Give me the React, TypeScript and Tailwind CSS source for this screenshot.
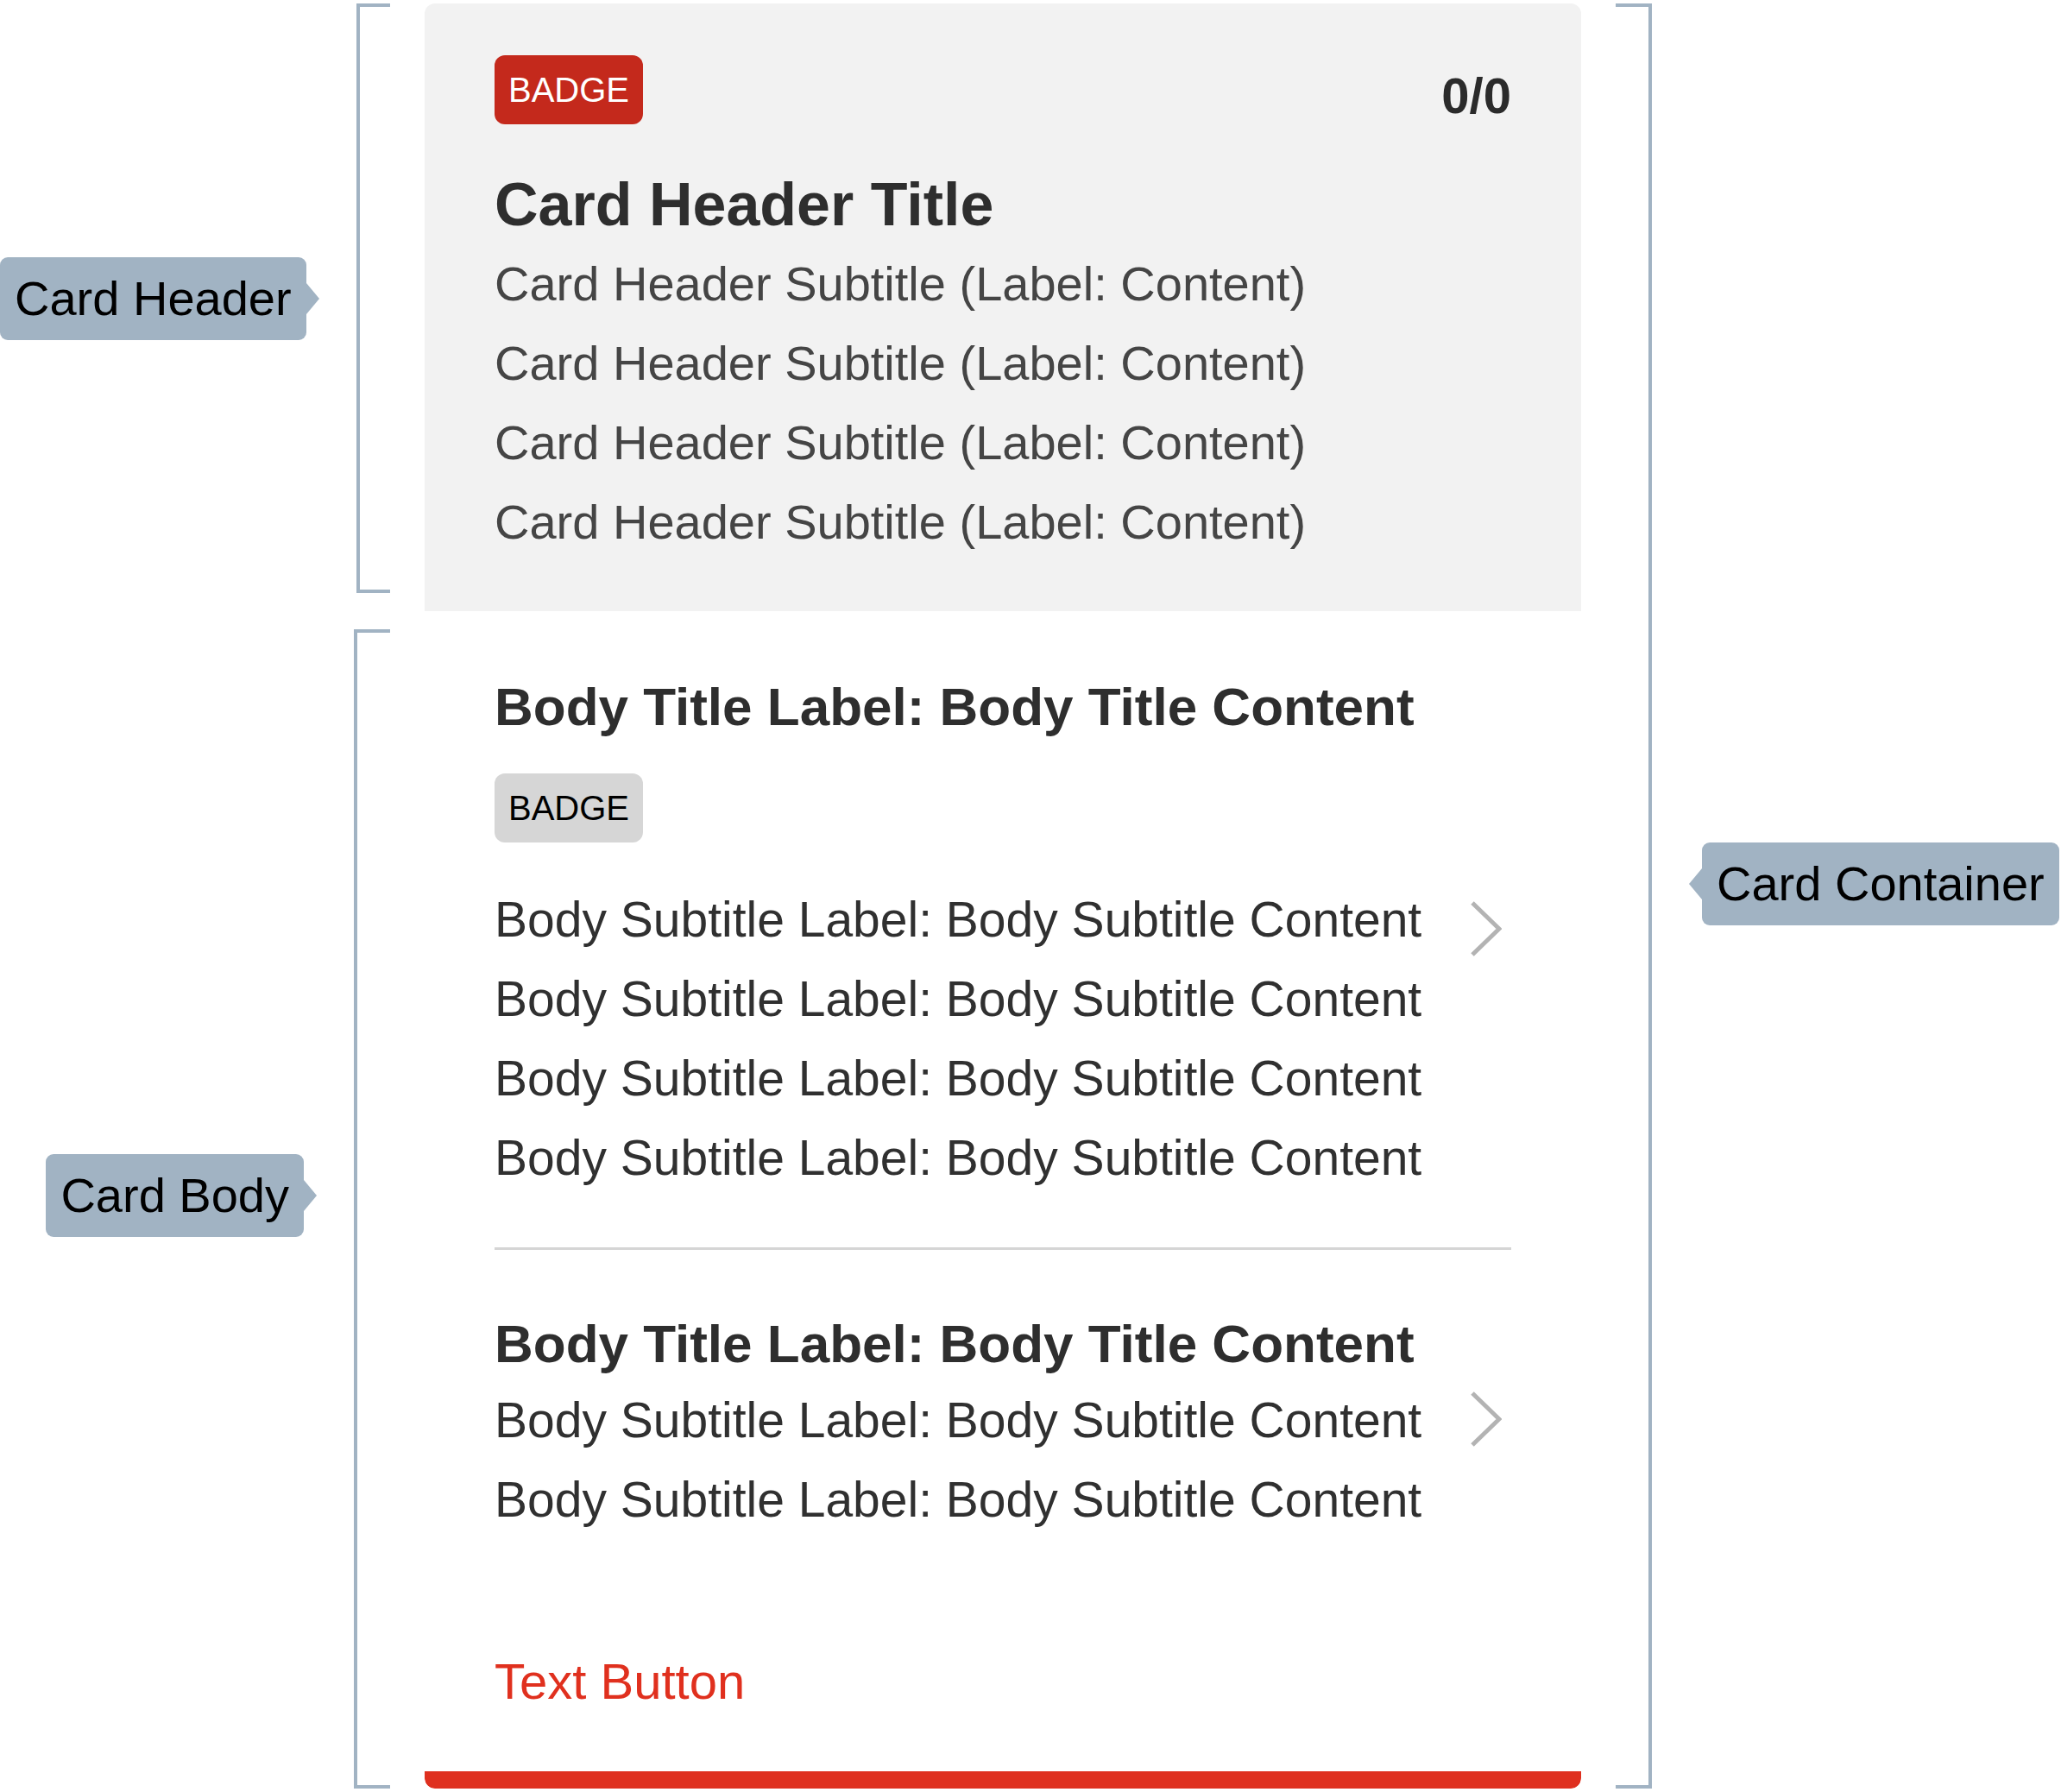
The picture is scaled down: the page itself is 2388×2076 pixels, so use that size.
const FONT = "font-['Liberation_Sans','Helvetica_Neue',Arial,sans-serif]"

function Chevron({ className }: { className?: string }) {
  return (
    <svg width="36" height="64" viewBox="0 0 36 64" className={className}>
      <polyline points="2,2 33,32 2,62" fill="none" stroke="#b3b3b3" strokeWidth="5" />
    </svg>
  )
}

// label with a little pointer, used for the annotations around the card
function Tag({ text, side, className }: { text: string; side: 'left' | 'right'; className?: string }) {
  return (
    <div className={`flex items-center ${className || ''}`}>
      {side === 'left' && (
        <div className="w-0 h-0 border-y-[18px] border-y-transparent border-r-[15px] border-r-[#a1b3c3]" />
      )}
      <div className="h-[96px] px-[17px] rounded-[9px] bg-[#a1b3c3] text-black text-[56px] leading-[96px] whitespace-nowrap">
        {text}
      </div>
      {side === 'right' && (
        <div className="w-0 h-0 border-y-[18px] border-y-transparent border-l-[15px] border-l-[#a1b3c3]" />
      )}
    </div>
  )
}

function SubRows({ rows, className }: { rows: string[]; className: string }) {
  return (
    <div className="flex flex-col">
      {rows.map((r, i) => (
        <div key={i} className={`leading-[92px] whitespace-nowrap ${className}`}>
          {r}
        </div>
      ))}
    </div>
  )
}

const HEADER_SUB = 'Card Header Subtitle (Label: Content)'
const BODY_SUB = 'Body Subtitle Label: Body Subtitle Content'

export default function App() {
  return (
    <div className={`w-[2388px] h-[2076px] overflow-hidden bg-white flex pt-[4px] ${FONT}`}>
      {/* Left annotations */}
      <div className="w-[452px] flex flex-col shrink-0">
        <div className="h-[683px] flex items-center justify-end">
          <Tag text="Card Header" side="right" className="mr-[43px]" />
          <div className="w-[42px] h-full border-l-4 border-y-4 border-[#a1b3c3]" />
        </div>
        <div className="h-[1343px] mt-[42px] flex items-center justify-end">
          <Tag text="Card Body" side="right" className="mr-[43px] mb-[32px]" />
          <div className="w-[42px] h-full border-l-4 border-y-4 border-[#a1b3c3]" />
        </div>
      </div>

      {/* Card */}
      <div className="ml-[40px] w-[1340px] h-[2068px] shrink-0 flex flex-col rounded-[12px] overflow-hidden">
        {/* Header */}
        <div className="bg-[#f2f2f2] h-[704px] px-[81px] pt-[60px] flex flex-col">
          <div className="flex items-center justify-between">
            <span className="h-[80px] px-[16px] rounded-[12px] bg-[#c4291c] text-white text-[40px] leading-[80px]">
              BADGE
            </span>
            <span className="mt-[14px] text-[58px] leading-none font-bold text-[#2b2b2b]">0/0</span>
          </div>
          <div className="mt-[58px] text-[70px] leading-none font-bold text-[#2e2e2e] whitespace-nowrap">
            Card Header Title
          </div>
          <div className="mt-[11px]">
            <SubRows rows={[HEADER_SUB, HEADER_SUB, HEADER_SUB, HEADER_SUB]} className="text-[56px] text-[#454545]" />
          </div>
        </div>

        {/* Body */}
        <div className="flex-1 bg-white px-[81px] pt-[80px] flex flex-col">
          <div className="text-[62px] leading-none font-bold text-[#2e2e2e] whitespace-nowrap">
            Body Title Label: Body Title Content
          </div>
          <div className="mt-[46px] flex">
            <span className="h-[80px] px-[16px] rounded-[12px] bg-[#d6d6d6] text-black text-[40px] leading-[80px]">
              BADGE
            </span>
          </div>
          <div className="mt-[43px] flex justify-between items-start">
            <SubRows rows={[BODY_SUB, BODY_SUB, BODY_SUB, BODY_SUB]} className="text-[57px] text-[#303030]" />
            <Chevron className="mt-[25px] mr-[11px]" />
          </div>

          <div className="mt-[58px] h-[3px] bg-[#d5d5d5]" />

          <div className="mt-[78px] text-[62px] leading-none font-bold text-[#2e2e2e] whitespace-nowrap">
            Body Title Label: Body Title Content
          </div>
          <div className="mt-[11px] flex justify-between items-start">
            <SubRows rows={[BODY_SUB, BODY_SUB]} className="text-[57px] text-[#303030]" />
            <Chevron className="mt-[13px] mr-[11px]" />
          </div>

          <div className="mt-[119px] text-[58px] leading-[92px] text-[#e0301e]">Text Button</div>
        </div>

        <div className="h-[20px] shrink-0 bg-[#df301f] rounded-b-[12px]" />
      </div>

      {/* Right annotation */}
      <div className="ml-[40px] h-[2068px] flex items-center">
        <div className="w-[42px] h-full border-r-4 border-y-4 border-[#a1b3c3]" />
        <Tag text="Card Container" side="left" className="ml-[43px] mb-[28px]" />
      </div>
    </div>
  )
}
